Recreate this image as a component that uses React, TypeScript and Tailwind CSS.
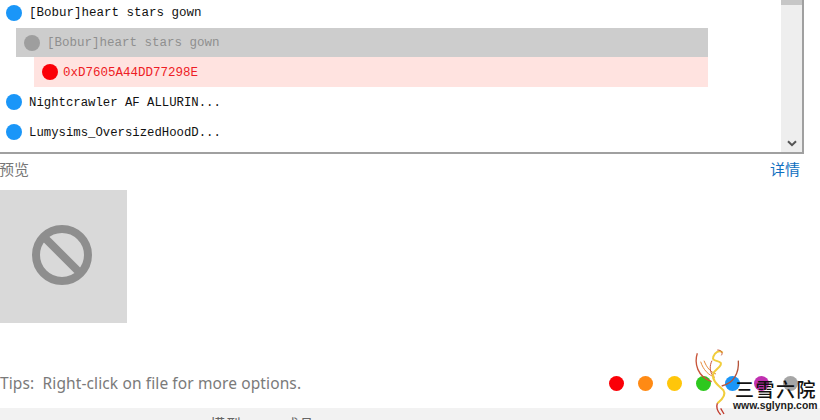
const rows = [
  { text: "[Bobur]heart stars gown", dot: "bg-[#1a96f8]", color: "text-[#111111] text-[12.5px]", row: "h-[31px] gap-[7px]", indent: "pl-[6px]" },
  { text: "[Bobur]heart stars gown", dot: "bg-[#9e9e9e]", color: "text-[#8f8f8f] text-[12.5px]", row: "h-[29px] gap-[7px] bg-[#cdcdcd]", indent: "ml-[16px] pl-[8px]" },
  { text: "0xD7605A44DD77298E", dot: "bg-[#fb0007]", color: "text-[#ee1c25] text-[12.5px]", row: "h-[30px] gap-[5px] bg-[#ffe3e0]", indent: "ml-[34px] pl-[8px]" },
  { text: "Nightcrawler AF ALLURIN...", dot: "bg-[#1a96f8]", color: "text-[#111111] text-[12.3px]", row: "h-[30px] gap-[7px]", indent: "pl-[6px]" },
  { text: "Lumysims_OversizedHoodD...", dot: "bg-[#1a96f8]", color: "text-[#111111] text-[12.3px]", row: "h-[30px] gap-[7px]", indent: "pl-[6px]" },
];
const colors = ["bg-[#fb0007]", "bg-[#ff8a14]", "bg-[#ffc60a]", "bg-[#2dc81e]", "bg-[#1a96f8]", "bg-[#c030b0]", "bg-[#a6a6a6]"];

export default function App() {
  return (
    <div className="relative flex h-[420px] w-[820px] flex-col overflow-hidden bg-white font-['Liberation_Sans','Noto_Sans_CJK_SC',sans-serif]">
      <div className="flex h-[154px] w-[804px] shrink-0 border-r-2 border-b-2 border-[#a0a0a0]">
        <div className="flex min-w-0 flex-1 flex-col">
          <div className="-mt-[3px] flex w-[708px] flex-col">
            {rows.map((r, i) => (
              <div key={i} className={`flex items-center ${r.row} ${r.indent}`}>
                <span className={`h-4 w-4 shrink-0 rounded-full ${r.dot}`} />
                <span className={`pt-[2px] font-['Liberation_Mono',monospace] whitespace-pre ${r.color}`}>{r.text}</span>
              </div>
            ))}
          </div>
        </div>
        <div className="flex w-[21px] shrink-0 flex-col justify-between bg-[#eeeeee]">
          <div className="h-[5px] w-full bg-[#c6c6c6]" />
          <div className="flex h-[16px] items-center justify-center pb-[2px]">
            <svg width="10" height="7" viewBox="0 0 10 7">
              <path d="M1 1.2 5 5.2 9 1.2" fill="none" stroke="#555555" strokeWidth="2" />
            </svg>
          </div>
        </div>
      </div>

      <div className="flex h-[36px] w-[800px] shrink-0 items-start justify-between pt-[5px]">
        <span className="-ml-px text-[15px] leading-[22px] text-[#777777]">预览</span>
        <span className="text-[15px] leading-[22px] text-[#0f6fc0]">详情</span>
      </div>

      <div className="flex h-[133px] w-[127px] shrink-0 items-center justify-center bg-[#d9d9d9] pr-[4px] pb-[3px]">
        <svg width="62" height="62" viewBox="0 0 62 62">
          <circle cx="31" cy="31" r="26" fill="none" stroke="#8e8e8e" strokeWidth="8" />
          <path d="M13 13 49 49" fill="none" stroke="#8e8e8e" strokeWidth="8" />
        </svg>
      </div>

      <div className="mt-[50px] flex h-[22px] w-[804px] shrink-0 items-center justify-between">
        <span className="font-['Noto_Sans',sans-serif] text-[15.5px] tracking-[0.11px] whitespace-pre text-[#7a7a7a]">Tips:  Right-click on file for more options.</span>
        <div className="flex items-center gap-[14px] pr-[6px] pb-[2px]">
          {colors.map((c) => (
            <span key={c} className={`h-[15px] w-[15px] rounded-full ${c}`} />
          ))}
        </div>
      </div>

      <div className="mt-[13px] flex min-h-0 flex-1 items-start gap-[42px] overflow-hidden bg-[#f2f2f2] pt-[7px] pl-[210px]">
        <span className="text-[15px] leading-[20px] tracking-[1px] text-[#666666]">模型</span>
        <span className="text-[15px] leading-[20px] text-[#666666]">成品</span>
      </div>

      <svg className="absolute top-[340px] left-[680px]" width="140" height="80" viewBox="0 0 420 240">
        <path d="M52 40C42 70 52 110 95 125" fill="none" stroke="#c8553a" strokeWidth="4" />
        <path d="M62 65C70 90 85 105 105 112M72 62C80 82 90 95 108 102" fill="none" stroke="#e58a3a" strokeWidth="3" />
        <path d="M175 62C178 100 160 130 125 138" fill="none" stroke="#b5533a" strokeWidth="4" />
        <path d="M128 38C118 28 104 38 100 50C95 64 112 60 122 68C128 78 108 86 100 100C94 120 112 134 130 150C140 165 125 180 112 190" fill="none" stroke="#f1cd3c" strokeWidth="6" />
        <path d="M112 30C124 30 130 38 124 46M96 62C88 78 90 92 96 104" fill="none" stroke="#c8553a" strokeWidth="3" />
        <path d="M112 190C108 202 112 214 122 224M122 205 132 222" fill="none" stroke="#c0392b" strokeWidth="4" />
      </svg>
      <div className="absolute top-[379px] left-[735px] font-['Noto_Sans_CJK_SC',sans-serif] text-[19px] leading-[20px] font-medium tracking-[1.5px] whitespace-nowrap text-[#111111]">三雪六院</div>
      <div className="absolute top-[400px] left-[733px] font-['Liberation_Sans',sans-serif] text-[10.4px] leading-[12px] font-bold whitespace-nowrap text-[#222222]">www.sglynp.com</div>
    </div>
  );
}
